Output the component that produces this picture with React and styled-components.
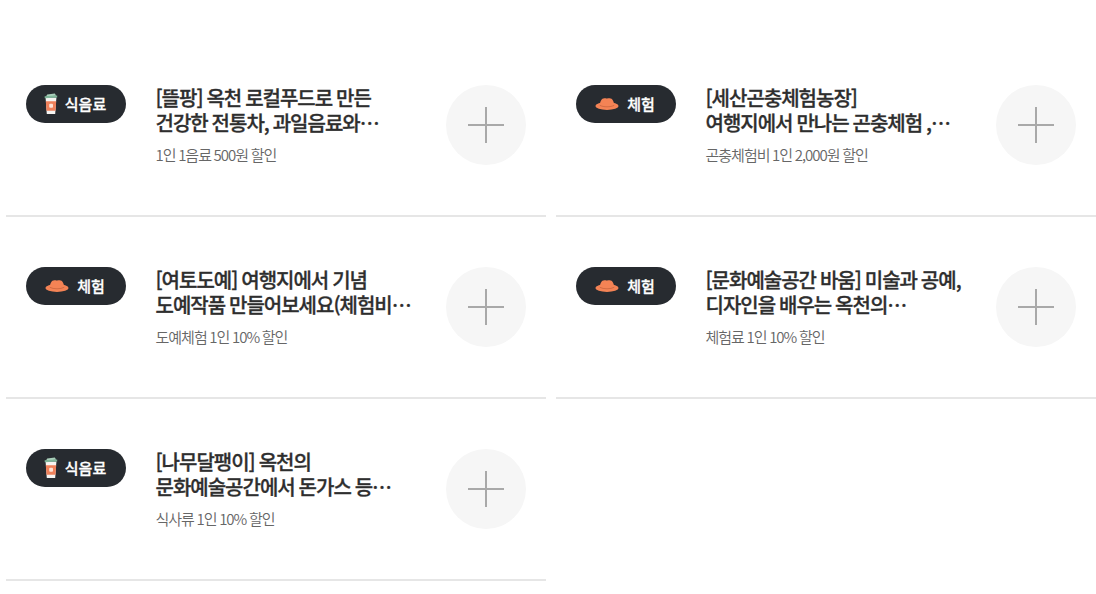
import React from "react";
import styled, { createGlobalStyle } from "styled-components";

const GlobalStyle = createGlobalStyle`
  * {
    box-sizing: border-box;
  }
  body {
    margin: 0;
    background: #fff;
    font-family: "Noto Sans CJK KR", "Noto Sans", sans-serif;
  }
`;

const List = styled.ul`
  display: grid;
  grid-template-columns: 540px 540px;
  grid-auto-rows: 182px;
  column-gap: 10px;
  margin: 0;
  padding: 35px 0 0 6px;
  list-style: none;
`;

const Item = styled.li`
  display: flex;
  align-items: flex-start;
  padding: 50px 20px 0;
  border-bottom: 2px solid #e6e6e6;
`;

const Badge = styled.span`
  display: flex;
  align-items: center;
  justify-content: center;
  gap: ${(props) => props.$gap};
  flex: none;
  width: 100px;
  height: 38px;
  padding-right: 2px;
  border-radius: 19px;
  background: #272b30;
  color: #fff;
  font-size: 15px;
  font-weight: 500;
  line-height: 38px;
  -webkit-text-stroke: 0.3px #fff;

  svg {
    display: block;
    flex: none;
  }
`;

const Info = styled.div`
  flex: none;
  width: 320px;
  padding-left: 29.5px;
`;

const Title = styled.strong`
  display: block;
  color: #2e2e2e;
  font-size: 20px;
  font-weight: 500;
  letter-spacing: -1px;
  word-spacing: -0.7px;
  line-height: 25px;
  white-space: pre;
  -webkit-text-stroke: 0.3px #2e2e2e;
`;

const Benefit = styled.p`
  margin: 9px 0 0;
  color: #666;
  font-size: 15px;
  font-weight: 350;
  letter-spacing: -1px;
  word-spacing: -0.6px;
  line-height: 22px;
  white-space: nowrap;
`;

const MoreButton = styled.button`
  display: flex;
  align-items: center;
  justify-content: center;
  flex: none;
  width: 80px;
  height: 80px;
  padding: 0;
  border: 0;
  border-radius: 50%;
  background: #f6f6f6;
`;

const CupIcon = () => (
  <svg width="14" height="22" viewBox="0 0 14 22">
    <path d="M1.6 4.500h10.800l-1.200 16.500H2.800z" fill="#f6f4f2" />
    <path d="M1.800 8.200h10.400L11.500 17.800H2.500z" fill="#ee805a" />
    <rect x="5.200" y="10.700" width="3.800" height="4" rx="1" fill="#fde3d6" />
    <path d="M2 3.400L3.200 1.400 10.800.600 12.200 2.800z" fill="#a9cfba" />
    <path d="M.6 3.200L13.200 2.400v2L.8 5.200z" fill="#7fb69a" />
  </svg>
);

const HatIcon = () => (
  <svg width="24" height="12" viewBox="0 0 24 12">
    <ellipse cx="12" cy="8" rx="11.600" ry="3.900" fill="#f48355" />
    <path
      d="M4.800 7.600C5 3.600 6.400.200 9.400.200c1.100 0 1.600.200 2.600.200s1.500-.200 2.600-.200c3 0 4.400 3.400 4.600 7.400-3.700 2-10.700 2-14.400 0z"
      fill="#f48355"
    />
    <path
      d="M4.800 7.300c3.700 2 10.700 2 14.400 0"
      fill="none"
      stroke="#c9653f"
      strokeWidth="0.8"
    />
  </svg>
);

const PlusIcon = () => (
  <svg width="36" height="36" viewBox="0 0 36 36">
    <path d="M0 18h36M18 0v36" stroke="#a9a9a9" strokeWidth="2" />
  </svg>
);

const categories = {
  drink: { label: "식음료", gap: "7px", icon: <CupIcon /> },
  activity: { label: "체험", gap: "8px", icon: <HatIcon /> },
};

const benefits = [
  {
    category: "drink",
    title: "[뜰팡] 옥천 로컬푸드로 만든\n건강한 전통차, 과일음료와…",
    benefit: "1인 1음료 500원 할인",
  },
  {
    category: "activity",
    title: "[세산곤충체험농장]\n여행지에서 만나는 곤충체험 ,…",
    benefit: "곤충체험비 1인 2,000원 할인",
  },
  {
    category: "activity",
    title: "[여토도예] 여행지에서 기념\n도예작품 만들어보세요(체험비…",
    benefit: "도예체험 1인 10% 할인",
  },
  {
    category: "activity",
    title: "[문화예술공간 바움] 미술과 공예,\n디자인을 배우는 옥천의…",
    benefit: "체험료 1인 10% 할인",
  },
  {
    category: "drink",
    title: "[나무달팽이] 옥천의\n문화예술공간에서 돈가스 등…",
    benefit: "식사류 1인 10% 할인",
  },
];

const App = () => {
  return (
    <>
      <GlobalStyle />
      <List lang="ko">
        {benefits.map((item) => {
          const category = categories[item.category];
          return (
            <Item key={item.title}>
              <Badge $gap={category.gap}>
                {category.icon}
                {category.label}
              </Badge>
              <Info>
                <Title>{item.title}</Title>
                <Benefit>{item.benefit}</Benefit>
              </Info>
              <MoreButton type="button" aria-label="더보기">
                <PlusIcon />
              </MoreButton>
            </Item>
          );
        })}
      </List>
    </>
  );
};

export default App;
